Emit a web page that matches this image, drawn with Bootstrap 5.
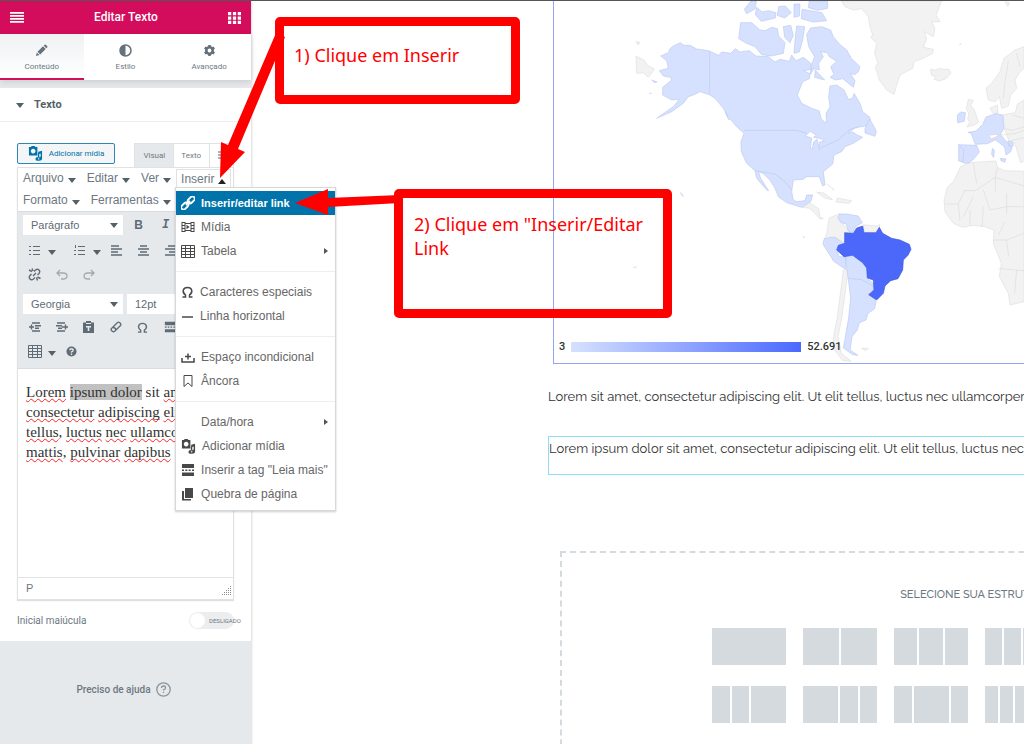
<!DOCTYPE html>
<html lang="pt-BR">
<head>
<meta charset="utf-8">
<meta name="viewport" content="width=device-width, initial-scale=1">
<title>Editar Texto</title>
<link href="https://cdn.jsdelivr.net/npm/bootstrap@5.3.0/dist/css/bootstrap.min.css" rel="stylesheet">
<style>
:root{--pink:#d30c5c;--panel:#e6e9ec;--ink:#556068;--soft:#6d7882;--line:#e0e2e4}
body{font-family:Roboto,"Liberation Sans",sans-serif;font-size:12px;color:var(--soft);border-top:1px solid #555;background:#fff}
button,select,input{font-family:inherit;color:inherit}
button{background:none;border:0;padding:0}
svg{display:block;flex:none}
.shell{min-height:calc(100vh - 1px)}
.side{width:251px;flex:none;background:var(--panel);box-shadow:0 0 3px rgba(0,0,0,.25);z-index:2}
.side-head{height:33px;background:var(--pink);color:#fff;padding:0 10px}
.side-head h1{font-size:12px;font-weight:500}
.side-tabs{background:#fff;height:46px;box-shadow:0 2px 6px rgba(0,0,0,.12)}
.side-tabs button{font-size:8px;gap:4px;border-bottom:2px solid transparent;padding-top:4px}
.side-tabs button.on{background:linear-gradient(#eff1f3,#fff);border-color:var(--pink)}
.sect{margin-top:8px;height:34px;border-bottom:1px solid #eceeef;padding:2px 0 0 16px;gap:10px;color:var(--ink);font-size:11px;font-weight:700}
.body-pane{padding:21px 17px 12px}
.add-media{width:98px;height:21px;margin-bottom:3px;border:1px solid #2f86b3;border-radius:2px;background:#f3f5f6;color:#0073aa;font-size:8px;gap:6px}
.ed-tab{height:24px;border:1px solid var(--line);border-bottom:0;font-size:8px;background:#fff}
.ed-tab+.ed-tab{border-left:0}
.ed-tab.on{background:var(--panel)}
.ed-tab.slim{padding:0 8px 0 7px}
.editor{border:1px solid var(--line);box-shadow:0 1px 1px rgba(0,0,0,.12);font-family:"Liberation Sans",Arial,sans-serif}
.menus{height:43px;padding:1px 4px 0}
.menus .m{height:18px;font-size:12px;gap:4px;padding:0 1px}
.menus .m+.m{margin-left:9px}
.menus .line2{margin-top:4px}
.open-item{margin-left:4px;height:18px;border:1px solid var(--line);border-bottom:0}
.tri{width:0;height:0;border:4px solid transparent;border-top:5px solid var(--ink);border-bottom:0;margin-top:4px}
.tri.up{border-top:0;border-bottom:5px solid #222}
.tools{background:var(--panel);height:158px;border-top:1px solid #d9dcdf;border-bottom:1px solid #d9dcdf;padding:3px;overflow:hidden;color:#5f6b75}
.trow{height:24px}
.trow.tall{height:20px;margin-bottom:3px}
.trow.gap-top{margin:8px 0 1px}
.trow .b{width:27px;flex:none;height:24px;display:flex;align-items:center;justify-content:center}
.trow .n{width:10px;flex:none}
.pick{position:relative;flex:none;margin:0 2px}
.pick select{appearance:none;border:0;background:#fff;height:20px;width:100px;padding:0 8px;font-size:11px}
.pick .tri{position:absolute;right:5px;top:4px}
.doc{height:208px;padding:13px 8px 0;font:15px/20px "Liberation Serif",serif;color:#333;white-space:nowrap;overflow:hidden}
.doc p{margin:0}
.doc u{text-decoration:underline wavy #f22 1px;text-underline-offset:1px;text-decoration-skip-ink:none}
.sel{background:#c1c1c1}
.status{height:22px;border-top:1px solid var(--line);padding:0 2px 0 8px;font-size:11px}
.drop{position:absolute;top:17px;left:-2px;width:161px;background:#fff;border:1px solid #d6d8da;box-shadow:0 1px 2px rgba(0,0,0,.2);padding:3px 0 4px;z-index:5;font-size:12px;color:#595959}
.drop button{height:24px;width:100%;padding:0 7px 0 5px;gap:6px;text-align:left;color:#666;white-space:nowrap}
.drop svg{color:#484848}
.drop button.hot{background:#0073aa;color:#fff;font-weight:700;font-size:11px}
.drop button.hot svg{color:#fff}
.drop hr{margin:8px 0;border-color:#bbb}
.arr{border:3px solid transparent;border-left:4px solid #555;border-right:0}
.opt{padding-top:12px}
.opt label{font-size:10px}
.switch{position:relative;width:45px;height:17px}
.switch input{appearance:none;width:45px;height:17px;border-radius:9px;background:#ebedef;margin:0;display:block}
.switch input::before{content:"";display:block;width:15px;height:15px;margin:1px;border-radius:50%;background:#fff}
.switch span{position:absolute;left:20px;top:5px;font-size:6px;line-height:7px}
.help{margin-top:41px;font-size:10px;font-weight:500;gap:5px;padding-right:4px;color:var(--soft)}
.stage{min-width:0;padding-left:297px}
.canvas{width:857px}
.geo{position:relative;margin-left:5px;height:363px;border:1px solid #97a6ec;border-top:0;overflow:hidden}
.geo svg{width:470px;height:362px}
.legend{position:absolute;left:5px;top:338px;gap:6px;font-size:11px;font-weight:500;color:#333;line-height:16px}
.ramp{width:230px;height:10px;background:linear-gradient(90deg,#d6e1ff,#4b68ff)}
.copy{font:13px/24px Raleway,Lato,sans-serif;color:#333;white-space:nowrap;margin:0}
.first{margin-top:21px}
.boxed{margin-top:27px;border:1px solid #8fdcf3;height:39px}
.picker{margin:76px 12px 0;border:2px dashed #d5dadf;padding:34px 0 60px}
.picker h2{font:500 11px/15px Raleway,"Open Sans",sans-serif;text-align:center;color:#6d7882;margin:0 0 26px}
.presets{display:grid;grid-template-columns:repeat(6,74px);gap:21px 17px;justify-content:center}
.presets button{height:37px;display:flex;gap:2px}
.presets i{background:#d5dadf;flex:1 1 0;height:100%}
.presets .w2{flex-grow:2}.presets .w4{flex-grow:4}
.notes{position:absolute;left:0;top:-1px;z-index:9;pointer-events:none}
.note{position:absolute;border:9px solid red;border-radius:5px;color:red;font:18px/24px "Noto Sans",sans-serif}
.note.a{left:275px;top:17px;width:245px;height:87px;padding:17px 10px}
.note.b{left:394px;top:189px;width:278px;height:129px;padding:14px 11px}
.note p{margin:0}
</style>
</head>
<body class="overflow-hidden position-relative">
<svg class="d-none">
<symbol id="media" viewBox="0 0 16 16"><path fill="currentColor" fill-rule="evenodd" d="M1 1h2l1-1h3l1 1h2v9H1zM5.500 3a2.500 2.500 0 1 0 .01 0M11 6l4-1v8.500a2 2 0 1 1-1.500-2V8L12 8.500V14a2 2 0 1 1-3-2h1.500V9z"/></symbol>
<symbol id="omega" viewBox="0 0 12 12"><path fill="none" stroke="currentColor" stroke-width="1.500" d="M1 11h3V9C0 6 1.500 1.500 6 1.500S12 6 8 9v2h3"/></symbol>
<symbol id="more" viewBox="0 0 14 14"><path fill="currentColor" d="M1 1h12v4H1zM1 6.500h2v1.500H1zM4.300 6.500h2v1.500h-2zM7.600 6.500h2v1.500h-2zM11 6.500h2v1.500h-2zM1 9.500h12v3.500H1z"/></symbol>
<symbol id="grid" viewBox="0 0 14 13"><path fill="none" stroke="currentColor" d="M.5.5h13v12H.5zM.5 3.500h13M.5 6.500h13M.5 9.500h13M4.500.5v12M9.500.5v12"/></symbol>
</svg>

<div class="shell d-flex">
<aside class="side d-flex flex-column">
  <header class="side-head d-flex align-items-center justify-content-between">
    <button aria-label="Menu"><svg width="14" height="11" viewBox="0 0 14 11"><path fill="#fff" d="M0 0h14v1.700H0zM0 3h14v1.700H0zM0 6h14v1.700H0zM0 9h14v1.700H0z"/></svg></button>
    <h1 class="m-0">Editar Texto</h1>
    <button aria-label="Elementos"><svg width="13" height="12" viewBox="0 0 12 11"><path fill="#fff" d="M0 0h3v3H0zM4.500 0h3v3h-3zM9 0h3v3H9zM0 4h3v3H0zM4.500 4h3v3h-3zM9 4h3v3H9zM0 8h3v3H0zM4.500 8h3v3h-3zM9 8h3v3H9z"/></svg></button>
  </header>
  <nav class="side-tabs row row-cols-3 g-0">
    <button class="on d-flex flex-column align-items-center justify-content-center"><svg width="13" height="13" viewBox="0 0 13 13"><path fill="#65717b" d="M1 12l.8-3.500L4.500 11zM2.500 7.800l5.500-5.500 2.700 2.700-5.500 5.500zM8.700 1.600l.9-.9Q10.300.2 11 .9l1.100 1.100q.7.700.1 1.400l-.9.900z"/></svg>Conteúdo</button>
    <button class="d-flex flex-column align-items-center justify-content-center"><svg width="13" height="13" viewBox="0 0 13 13"><circle cx="6.500" cy="6.500" r="5.500" fill="#fff" stroke="#65717b" stroke-width="1.500"/><path fill="#65717b" d="M6.500 1v11a5.500 5.500 0 0 1 0-11"/></svg>Estilo</button>
    <button class="d-flex flex-column align-items-center justify-content-center"><svg width="13" height="13" viewBox="0 0 13 13"><circle cx="6.500" cy="6.500" r="3.200" fill="none" stroke="#65717b" stroke-width="2.600"/><path stroke="#65717b" stroke-width="2.600" d="M6.500 1v2.500M6.500 9.500V12M1.700 3.700L4 5M9 8l2.300 1.300M1.700 9.300L4 8M9 5l2.300-1.300"/></svg>Avançado</button>
  </nav>
  <div class="sect d-flex align-items-center bg-white"><span class="tri mt-0"></span>Texto</div>
  <section class="body-pane bg-white">
    <div class="d-flex justify-content-between">
      <button class="add-media d-flex align-items-center justify-content-center"><svg width="15" height="15"><use href="#media"/></svg>Adicionar mídia</button>
      <div class="d-flex">
        <button class="ed-tab on px-2">Visual</button><button class="ed-tab slim">Texto</button><button class="ed-tab px-2" aria-label="Dinâmico"><svg width="7" height="9" viewBox="0 0 7 9"><path stroke="#556068" fill="none" d="M0 1h7M0 4h7M0 7h7"/></svg></button>
      </div>
    </div>
    <div class="editor">
      <div class="menus">
        <div class="d-flex">
          <button class="m d-flex align-items-center">Arquivo<span class="tri"></span></button>
          <button class="m d-flex align-items-center">Editar<span class="tri"></span></button>
          <button class="m d-flex align-items-center">Ver<span class="tri"></span></button>
          <div class="open-item position-relative">
            <button class="m d-flex align-items-center px-1" aria-expanded="true">Inserir<span class="tri up"></span></button>
            <div class="drop">
              <button class="hot d-flex align-items-center"><svg width="14" height="14" viewBox="0 0 14 14"><g fill="none" stroke="currentColor" stroke-width="1.800"><rect x="6.200" y="1.800" width="8" height="4.600" rx="2.300" transform="rotate(-45 10 4)"/><rect x="-.2" y="7.600" width="8" height="4.600" rx="2.300" transform="rotate(-45 4 10)"/><path d="M5 9l4-4"/></g></svg>Inserir/editar link</button>
              <button class="d-flex align-items-center"><svg width="14" height="12" viewBox="0 0 14 12"><path fill="none" stroke="currentColor" d="M1 1v10M4 1v10M10 1v10M13 1v10M1 1.500h3M1 4.500h3M1 7.500h3M1 10.500h3M10 1.500h3M10 4.500h3M10 7.500h3M10 10.500h3M4 2.500h6M4 9.500h6"/><path fill="currentColor" d="M5.500 3.800L8.500 6 5.500 8.200z"/></svg>Mídia</button>
              <button class="d-flex align-items-center"><svg width="14" height="13"><use href="#grid"/></svg>Tabela<span class="arr ms-auto"></span></button>
              <hr>
              <button class="d-flex align-items-center"><svg width="13" height="12"><use href="#omega"/></svg>Caracteres especiais</button>
              <button class="d-flex align-items-center"><svg width="13" height="12" viewBox="0 0 13 12"><path stroke="currentColor" stroke-width="1.500" d="M1 7h11"/></svg>Linha horizontal</button>
              <hr>
              <button class="d-flex align-items-center"><svg width="14" height="12" viewBox="0 0 14 12"><path fill="none" stroke="currentColor" stroke-width="1.500" d="M1 7v4h12V7M4 5.500h6M7 2.500v6"/></svg>Espaço incondicional</button>
              <button class="d-flex align-items-center"><svg width="14" height="14" viewBox="0 0 14 14"><path fill="none" stroke="currentColor" d="M3 1.500h8v11L7 9l-4 3.500z"/></svg>Âncora</button>
              <hr>
              <button class="d-flex align-items-center"><svg width="14" height="12"></svg>Data/hora<span class="arr ms-auto"></span></button>
              <button class="d-flex align-items-center"><svg width="15" height="15"><use href="#media"/></svg><span>Adicionar mídia</span></button>
              <button class="d-flex align-items-center"><svg width="14" height="14"><use href="#more"/></svg>Inserir a tag "Leia mais"</button>
              <button class="d-flex align-items-center"><svg width="14" height="14" viewBox="0 0 14 14"><path fill="currentColor" d="M4 1h8v10H4zM1 4h2v8h7v1.500H1z"/></svg>Quebra de página</button>
            </div>
          </div>
        </div>
        <div class="d-flex line2">
          <button class="m d-flex align-items-center">Formato<span class="tri"></span></button>
          <button class="m d-flex align-items-center">Ferramentas<span class="tri"></span></button>
        </div>
      </div>
      <div class="tools">
        <div class="trow tall d-flex align-items-center">
          <div class="pick"><select aria-label="Formato"><option>Parágrafo</option></select><span class="tri"></span></div>
          <button class="b fw-bold" aria-label="Negrito">B</button><button class="b fw-bold fst-italic font-monospace" aria-label="Itálico">I</button>
        </div>
        <div class="trow d-flex align-items-center">
          <button class="b" aria-label="Marcadores"><svg width="11" height="10" viewBox="0 0 11 10"><path stroke="currentColor" d="M4 1.500h7M4 5.500h7M4 9.500h7M0 1.500h2M0 5.500h2M0 9.500h2"/></svg></button><span class="n"><span class="tri d-block"></span></span><span class="px-1"></span>
          <button class="b" aria-label="Numeração"><svg width="11" height="10" viewBox="0 0 11 10"><path stroke="currentColor" d="M4 1.500h7M4 5.500h7M4 9.500h7M1.500 0v3M0 5.500h2M0 9.500h2"/></svg></button><span class="n"><span class="tri d-block"></span></span>
          <button class="b" aria-label="Esquerda"><svg width="11" height="11" viewBox="0 0 11 11"><path stroke="currentColor" stroke-width="1.500" d="M0 1h8M0 4h11M0 7h7M0 10h11"/></svg></button>
          <button class="b" aria-label="Centro"><svg width="11" height="11" viewBox="0 0 11 11"><path stroke="currentColor" stroke-width="1.500" d="M2 1h7M0 4h11M2 7h7M0 10h11"/></svg></button>
          <button class="b" aria-label="Direita"><svg width="11" height="11" viewBox="0 0 11 11"><path stroke="currentColor" stroke-width="1.500" d="M3 1h8M0 4h11M4 7h7M0 10h11"/></svg></button>
        </div>
        <div class="trow d-flex align-items-center">
          <button class="b" aria-label="Remover link"><svg width="13" height="13" viewBox="0 0 13 13"><g fill="none" stroke="currentColor" stroke-width="1.400"><path d="M6 3.500l1.500-1.500q2-1.500 3.500 0t0 3.500L9.500 7M7 9.500L5.500 11q-2 1.500-3.500 0t0-3.500L3.500 6M5 8l3-3M1 2l3 1.500M4 .5l1 2.500M8.500 9.500l1 3M9.500 9l3 1.500"/></g></svg></button>
          <button class="b opacity-50" aria-label="Desfazer"><svg width="12" height="11" viewBox="0 0 12 11"><path fill="none" stroke="currentColor" stroke-width="1.300" d="M4 1L1 4l3 3M1 4h6q4 0 4 3t-4 3H5"/></svg></button>
          <button class="b opacity-50" aria-label="Refazer"><svg width="12" height="11" viewBox="0 0 12 11"><path fill="none" stroke="currentColor" stroke-width="1.300" d="M8 1l3 3-3 3M11 4H5Q1 4 1 7t4 3h2"/></svg></button>
        </div>
        <div class="trow tall gap-top d-flex align-items-center">
          <div class="pick"><select aria-label="Fonte"><option>Georgia</option></select><span class="tri"></span></div>
          <div class="pick"><select aria-label="Tamanho"><option>12pt</option></select></div>
        </div>
        <div class="trow d-flex align-items-center">
          <button class="b" aria-label="Diminuir recuo"><svg width="12" height="10" viewBox="0 0 12 10"><path stroke="currentColor" stroke-width="1.400" d="M3 1h8M6 3.700h6M6 6.300h4M3 9h8M0 5h5M2.500 2.500v5"/></svg></button>
          <button class="b" aria-label="Aumentar recuo"><svg width="12" height="10" viewBox="0 0 12 10"><path stroke="currentColor" stroke-width="1.400" d="M1 1h8M0 3.700h6M2 6.300h4M1 9h8M6 5h6M9.500 2.500v5"/></svg></button>
          <button class="b" aria-label="Colar"><svg width="11" height="12" viewBox="0 0 11 12"><path fill="currentColor" fill-rule="evenodd" d="M0 1.500h3V0h5v1.500h3V12H0zM3 5v1.500h1.700V10h1.600V6.500H8V5zM3 3h5V2H3z"/></svg></button>
          <button class="b" aria-label="Limpar"><svg width="12" height="12" viewBox="0 0 12 12"><path fill="none" stroke="currentColor" stroke-width="1.300" d="M1.500 7.500L7.500 1.500q1-.8 2 0l1 1q.8 1 0 2l-6 6q-1 .5-2 0l-1-1q-.8-1 0-2M3 6.500q2.500 0 3 2.500"/></svg></button>
          <button class="b" aria-label="Caracteres"><svg width="11" height="11"><use href="#omega"/></svg></button>
          <button class="b" aria-label="Leia mais"><svg width="12" height="12"><use href="#more"/></svg></button>
        </div>
        <div class="trow d-flex align-items-center">
          <button class="b" aria-label="Tabela"><svg width="14" height="13"><use href="#grid"/></svg></button><span class="n"><span class="tri d-block"></span></span>
          <button class="b" aria-label="Ajuda"><svg width="11" height="11" viewBox="0 0 11 11"><circle cx="5.500" cy="5.500" r="5" fill="currentColor"/><path fill="none" stroke="#e6e9ec" stroke-width="1.400" d="M3.800 4.300q0-1.600 1.700-1.600t1.700 1.400T5.500 6v.7M5.500 7.600V9"/></svg></button>
        </div>
      </div>
      <div class="doc" contenteditable="true" spellcheck="false">
        <p><u>Lorem</u> <span class="sel">ipsum dolor</span> sit <u>amet</u>,</p>
        <p><u>consectetur</u> <u>adipiscing</u> <u>elit.</u></p>
        <p><u>tellus</u>, <u>luctus</u> <u>nec</u> <u>ullamco</u></p>
        <p><u>mattis</u>, <u>pulvinar</u> <u>dapibus</u></p>
      </div>
      <div class="status d-flex align-items-center justify-content-between">P<svg class="align-self-end mb-1" width="9" height="9" viewBox="0 0 9 9"><path stroke="#8a9299" stroke-dasharray="1 1" d="M0 8.500h9M2 6.500h7M4 4.500h5M6 2.500h3M8 .5h1"/></svg></div>
    </div>
    <div class="opt d-flex align-items-center justify-content-between">
      <label for="cap">Inicial maiúcula</label>
      <div class="switch"><input type="checkbox" role="switch" id="cap"><span>DESLIGADO</span></div>
    </div>
  </section>
  <a href="#" class="help d-flex align-items-center justify-content-center text-decoration-none">Preciso de ajuda<svg width="15" height="15" viewBox="0 0 15 15"><g fill="none" stroke="#8a959e"><circle cx="7.500" cy="7.500" r="6.700" stroke-width="1.300"/><path stroke-width="1.300" d="M5.500 6q0-2 2-2t2 1.700-2 2v.8M7.500 9.700V11"/></g></svg></a>
</aside>

<main class="stage flex-grow-1 overflow-hidden">
 <div class="canvas">
  <div class="geo">
    <svg viewBox="42 3 1410 1086" stroke-linejoin="round" stroke-width="2">
      <g fill="#f2f2f2" stroke="#dfdfdf">
        <path d="M904 3L915 20 940 30 965 26 985 50 990 80 998 105 992 112 1010 130 1004 160 1014 190 1006 200 1018 240 1040 270 1062 283 1068 262 1080 225 1118 205 1122 185 1150 175 1178 160 1180 148 1150 142 1160 115 1152 95 1180 110 1185 85 1175 65 1200 65 1188 45 1205 3z"/>
        <path d="M288 168L312 180 322 195 344 208 325 232 310 218 290 220zM288 125l12 2-6 8z"/>
        <path d="M1172 208l15 2 10-4 20 2 10 0 6 12-15 16-20 7-16-5 6-8-14-4z"/>
        <path d="M1452 140L1425 150 1392 175 1380 215 1355 250 1338 265 1345 300 1365 305 1378 290 1385 325 1405 318 1412 285 1430 265 1425 240 1440 215 1452 205z"/>
        <path d="M1285 298l15 4-8 14 10 12 8 22 6 16-10 8-25 7 8-14-6-10 4-15-8-15zM1350 325l22-10 2 24-14 2zM1452 300l-20 12-6 26-36 6-2 30 16 40 6 16 14-2 18 60 12-6z"/>
        <path d="M1262 500L1290 488 1330 485 1368 483 1372 502 1395 512 1452 514V905L1410 915 1405 880 1378 830 1384 790 1360 730 1362 690 1335 680 1300 676 1268 682 1240 670 1215 636 1212 600 1222 562 1240 545z"/>
        <path d="M790 610l18-2 28 18 4 26 10 3-10 2-18-20-14-12-20-3zM830 577l22 2 26 20-22-4zM892 594l42 8-6 8-40-4z"/>
        <path d="M868 654L900 640 905 668 925 690 940 692 915 705 915 728 885 712 850 728 860 700zM970 674l38 4 12-4-8 22-40 2z"/>
        <path d="M910 810l14 0-10 80-10 70-10 50 10 50 30 24-26-2-30-40 4-40 10-50z"/>
        <path d="M1395 5l14 4-6 10zM965 1045l20 0-8 7zM280 802l10-2-4 4zM790 708l4 4-4 2zM327 279l8 2zM1258 134l6-2zM860 552l20 14 2 6"/>
      </g>
      <g fill="#d6e1ff" stroke="#bccaf0">
        <path d="M362 168L385 158 390 146 400 138 421 128 432 136 450 136 470 147 505 152 536 166 545 156 572 160 586 146 600 156 628 152 648 168 685 170 705 186 720 178 748 184 755 165 768 182 790 172 812 190 815 208 790 212 812 222 822 206 838 210 836 190 850 170 842 155 862 158 868 170 890 184 872 200 882 224 870 232 886 240 908 236 940 262 945 242 930 220 944 224 955 215 960 200 935 176 920 150 898 132 880 110 872 90 845 80 812 84 800 104 806 140 824 170 816 190 808 236 788 245 772 285 785 310 815 325 838 333 843 355 852 366 860 366 858 340 870 320 866 290 870 258 890 255 912 270 925 298 938 295 942 280 960 310 968 335 990 352 990 376 945 383 925 400 938 396 952 405 968 412 940 430 915 440 905 455 882 465 878 492 850 515 855 555 848 558 838 530 800 530 790 538 760 540 755 575 760 600 770 605 795 602 800 585 818 585 812 605 785 622 740 608 715 590 705 565 690 540 668 520 655 514 662 535 686 572 680 570 650 535 645 512 620 490 604 455 603 425 612 400 590 380 565 350 550 325 525 295 508 284 480 275 460 285 445 290 430 310 395 335 350 355 400 320 418 298 395 300 368 285 368 262 395 240 392 232 370 228 358 212 385 205 380 182z"/>
        <path d="M602 68L635 68 660 90 675 92 695 82 712 86 716 108 735 128 730 160 695 168 665 164 645 140 620 130 596 116zM730 80l22-4 8 30-10 22-16-16zM770 78l24 2-6 40-10 36-16 4 4-50zM613 28l20-25h16l-4 24-25 14zM650 22l16 14 20-4 22 6-2 16-42 10-18-20zM716 20l20-2 18 20-20 16-22-8zM762 12h18l-2 36-16 4zM808 3h55v22l-30 6-28-8zM786 28l60 10 14 24-40 4-36-10zM826 210l28 30-30-8zM335 240l16 6-8 2zM975 385l14-28 20 36-4 16-30-10zM555 335l12 25zM422 578l8 12z"/>
        <path d="M1252 345l10-9 14 2-3 26-20 4zM1256 434l54 2 8 20-16 20-14 12-14 2-18-8zM1284 397l24-4 20-20 10-22 30-10 20 4 4 38-10 20 12 16 22 24-4 12-14 10-4-24-28-22-24 12-36 2-12-32zM1357 445l6 6-2 22-6-10zM1382 475l16 2-4 10-12-6zM1404 424l14 2 2 12-12 2z"/>
        <path d="M900 642l20 0 35 6 12 20-18 10-12 20-12-4-6-22-16-4-10-16zM885 712l28 20-22 18 6 20 20 0 0 38-36-24-32-52 4-16 22-4zM916 768l20-4 34 22 12 20 0 30 20 16-4 24 10 30-4 20-20 14-6 20-20 8-6 22-16 20-6 40 24 16-16-2-28-20 16-90 6-60z"/>
      </g>
      <path fill="none" stroke="#bccaf0" d="M509 152V284M612 391H770L800 400M845 442L895 420 930 388 955 382M645 512L705 522 735 545 755 570M1256 434l16 16-4 36M925 835l40 4 35 20M985 880l20 12"/>
      <path fill="#fff" stroke="#bccaf0" d="M795 408l16-14 18 12-8 6 22 4 10 8-14 2 0 22-8-30-10 8-4 20-6-2 4-30z"/>
      <path fill="#fff" stroke="#d5d5d5" d="M1346 406l22-3 8 4-22 10z"/>
      <path fill="none" stroke="#dcdcdc" d="M1372 502l-6 30-60 40-36 0M1300 490l10 60M1215 612h40l20-42M1366 532v42M1300 590l-30 60M1330 570l20 60 50-10 50 0M1255 612l5 50M1290 630v46M1330 620l-4 60M1360 720h40l52-20M1376 806l76 6M1395 665l-20 40M1400 720l6 50M1430 810l-6 70M1400 580v60M1388 385l30 6 34-10M1385 405l40-4 27-10M1400 425l52-12M1365 532l87 26M1418 345l34 10M1405 185l-10 60-5 50M1430 160l10 40"/>
      <path fill="#4b68fb" stroke="#4059dd" d="M968 678L972 698 1008 698 1018 682 1028 700 1055 715 1080 720 1108 733 1113 748 1104 766 1090 780 1088 810 1074 836 1052 842 1035 858 1030 880 1010 900 986 884 1002 870 1000 840 982 834 980 804 968 788 938 766 912 770 890 750 895 736 914 730 914 698 940 700 950 684z"/>
    </svg>
    <div class="legend d-flex align-items-center"><span>3</span><span class="ramp"></span><span>52.691</span></div>
  </div>
  <p class="copy first">Lorem sit amet, consectetur adipiscing elit. Ut elit tellus, luctus nec ullamcorper mattis, pulvinar dapibus leo.</p>
  <div class="boxed"><p class="copy">Lorem ipsum dolor sit amet, consectetur adipiscing elit. Ut elit tellus, luctus nec ullamcorper mattis, pulvinar.</p></div>
  <section class="picker">
    <h2>SELECIONE SUA ESTRUTURA</h2>
    <div class="presets">
      <button aria-label="1 coluna"><i></i></button>
      <button aria-label="2 colunas"><i></i><i></i></button>
      <button aria-label="3 colunas"><i></i><i></i><i></i></button>
      <button aria-label="4 colunas"><i></i><i></i><i></i><i></i></button>
      <button aria-label="33 e 66"><i></i><i class="w2"></i></button>
      <button aria-label="66 e 33"><i class="w2"></i><i></i></button>
      <button aria-label="25, 25, 50"><i></i><i></i><i class="w2"></i></button>
      <button aria-label="50, 25, 25"><i class="w2"></i><i></i><i></i></button>
      <button aria-label="25, 50, 25"><i></i><i class="w2"></i><i></i></button>
      <button aria-label="5 colunas"><i></i><i></i><i></i><i></i><i></i></button>
      <button aria-label="6 colunas"><i></i><i></i><i></i><i></i><i></i><i></i></button>
      <button aria-label="16, 66, 16"><i></i><i class="w4"></i><i></i></button>
    </div>
  </section>
 </div>
</main>
</div>

<div class="notes">
  <div class="note a"><p>1) Clique em Inserir</p></div>
  <div class="note b"><p>2) Clique em "Inserir/Editar Link</p></div>
  <svg width="420" height="240" viewBox="0 0 420 240"><path fill="red" d="M276 33L285 37 238 149 245 152 220 178 221 142 228 145zM400 195v8L328 207v8L295 203 328 189v9z"/></svg>
</div>
<script src="https://cdn.jsdelivr.net/npm/bootstrap@5.3.0/dist/js/bootstrap.bundle.min.js"></script>
</body>
</html>
